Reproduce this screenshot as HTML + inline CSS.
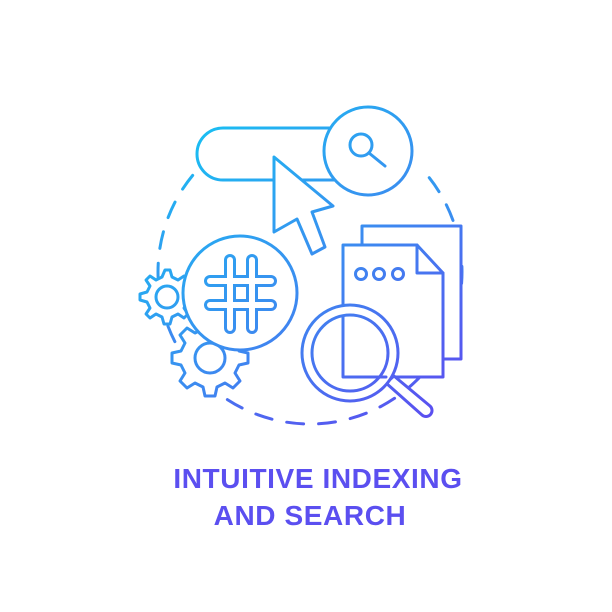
<!DOCTYPE html>
<html><head><style>
html,body{margin:0;padding:0;background:#fff;width:612px;height:612px;overflow:hidden}
.t{position:absolute;left:0;width:612px;text-align:center;font-family:"Liberation Sans",sans-serif;font-weight:bold;color:#5b4ff0;font-size:28px;letter-spacing:0.6px}
</style></head><body>
<svg width="612" height="612" style="position:absolute;left:0;top:0">
<defs>
<linearGradient id="g" gradientUnits="userSpaceOnUse" x1="180" y1="120" x2="440" y2="420">
<stop offset="0" stop-color="#16c3f2"/><stop offset="0.5" stop-color="#3a8ef0"/><stop offset="1" stop-color="#5c4cf0"/>
</linearGradient>
</defs>
<g fill="none" stroke="url(#g)" stroke-width="3" stroke-linecap="round" stroke-linejoin="round">
<circle cx="310" cy="272" r="152" stroke-dasharray="17 15" transform="rotate(20 310 272)"/>
<rect x="175" y="100" width="270" height="70" fill="#fff" stroke="none"/>
<!-- search bar -->
<rect x="197" y="128" width="180" height="52" rx="26" fill="#fff"/>
<circle cx="368" cy="151" r="44" fill="#fff"/>
<circle cx="361" cy="145" r="11"/>
<line x1="369" y1="153" x2="385" y2="166"/>
<!-- cursor -->
<path d="M274 157 L333 206 L312 212 L325 247 L312 254 L297 219 L274 232 Z" fill="#fff"/>
<!-- gears -->
<path d="M165 270 l5 0 2 7 6 3 6-4 4 4-4 6 3 6 7 2 0 6-7 2-3 6 4 6-4 4-6-4-6 3-2 7-6 0-2-7-6-3-6 4-4-4 4-6-3-6-7-2 0-6 7-2 3-6-4-6 4-4 6 4 6-3z" fill="#fff"/>
<circle cx="167" cy="297" r="11"/>
<path d="M205 320 l10 0 2 9 8 4 8-5 7 7-5 8 4 8 9 2 0 10-9 2-4 8 5 8-7 7-8-5-8 4-2 9-10 0-2-9-8-4-8 5-7-7 5-8-4-8-9-2 0-10 9-2 4-8-5-8 7-7 8 5 8-4z" fill="#fff"/>
<circle cx="210" cy="358" r="15"/>
<!-- hash circle -->
<circle cx="240" cy="293" r="57" fill="#fff"/>
</g>
<g stroke="url(#g)" stroke-width="12" stroke-linecap="round">
<line x1="230" y1="260" x2="230" y2="328"/><line x1="252" y1="260" x2="252" y2="328"/>
<line x1="210" y1="281" x2="271" y2="281"/><line x1="210" y1="305" x2="271" y2="305"/>
</g>
<g stroke="#fff" stroke-width="6" stroke-linecap="round">
<line x1="230" y1="260" x2="230" y2="328"/><line x1="252" y1="260" x2="252" y2="328"/>
<line x1="210" y1="281" x2="271" y2="281"/><line x1="210" y1="305" x2="271" y2="305"/>
</g>
<g fill="none" stroke="url(#g)" stroke-width="3" stroke-linecap="round" stroke-linejoin="round">
<rect x="362" y="226" width="99" height="133" fill="#fff"/>
<path d="M343 245 L417 245 L443 273 L443 377 L343 377 Z" fill="#fff"/>
<path d="M417 245 L417 273 L443 273"/>
<circle cx="361" cy="274" r="5.5"/><circle cx="379" cy="274" r="5.5"/><circle cx="398" cy="274" r="5.5"/>
<path d="M386 383 L394 376 L430 406 A6 6 0 0 1 422 415 Z" fill="#fff"/>
<circle cx="350" cy="353" r="48" fill="#fff"/>
<circle cx="350" cy="353" r="38"/>
<path d="M343 316 L343 377 L386 377"/>
</g>
</svg>
<div class="t" style="top:463px;left:12px">INTUITIVE INDEXING</div>
<div class="t" style="top:500px;left:4px">AND SEARCH</div>
</body></html>
